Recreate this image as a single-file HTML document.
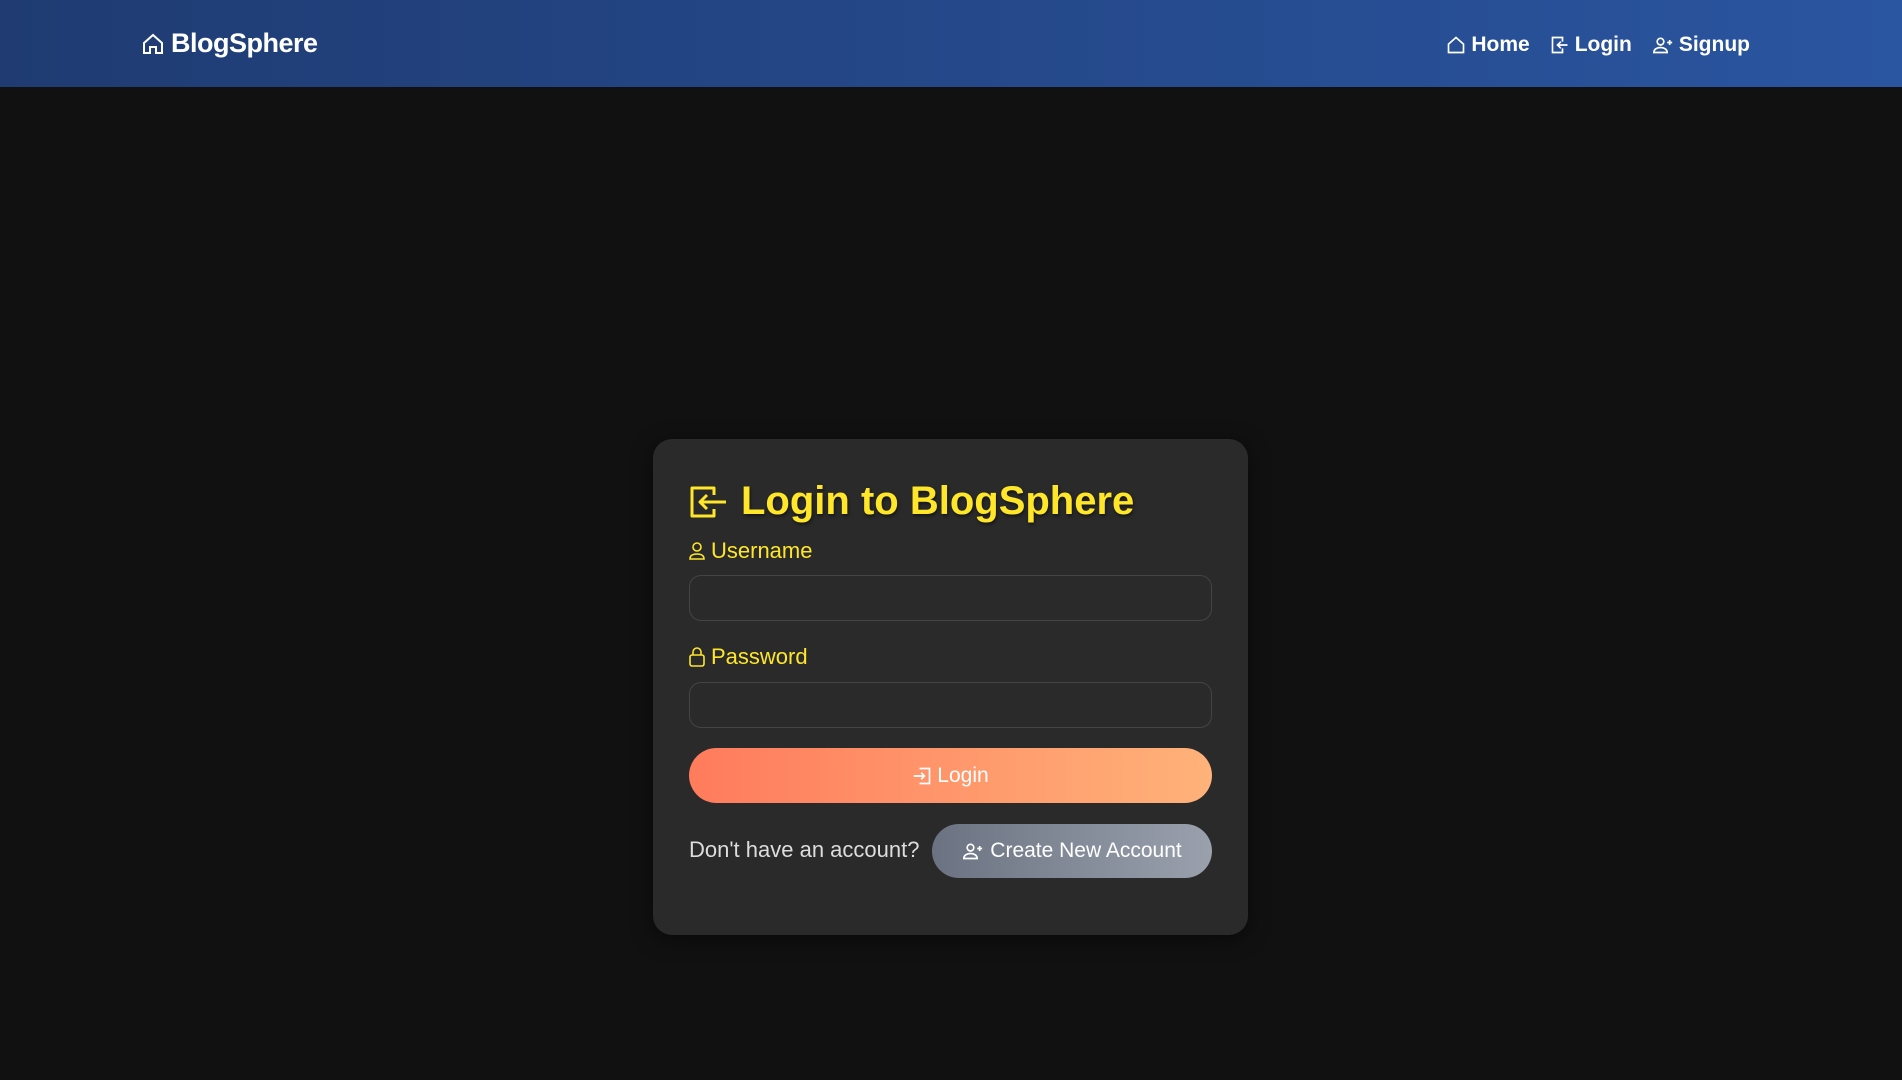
<!DOCTYPE html>
<html><head><meta charset="utf-8"><style>
*{box-sizing:border-box;margin:0;padding:0}
body{width:1902px;height:1080px;background:#111;font-family:"Liberation Sans",sans-serif;position:relative;overflow:hidden}
.nav{position:absolute;left:0;top:0;width:1902px;height:87px;background:linear-gradient(90deg,#1f3b72,#2a55a0);}
.brand{position:absolute;left:141px;top:28px;color:#fff;font-size:27px;font-weight:bold;display:flex;align-items:center;gap:6px;letter-spacing:-0.5px}
.links{position:absolute;right:152px;top:33px;display:flex;gap:20px;color:#fff;font-size:21px;font-weight:bold}
.links span{display:flex;align-items:center;gap:5px}
svg{display:block}
.card{position:absolute;left:653px;top:439px;width:595px;height:496px;background:#2a2a2a;border-radius:19px;box-shadow:0 4px 20px rgba(0,0,0,.5)}
.title{position:absolute;left:36px;top:40px;display:flex;align-items:center;gap:12px;color:#ffe629;font-size:40px;font-weight:bold;text-shadow:1px 2px 3px rgba(0,0,0,.5)}
.lbl{position:absolute;left:36px;color:#ffe629;font-size:22px;display:flex;align-items:center;gap:6px}
.inp{position:absolute;left:36px;width:523px;height:46px;border:1px solid #444;border-radius:12px;background:#2a2a2a}
.btn{position:absolute;left:36px;top:309px;width:523px;height:55px;border-radius:28px;background:linear-gradient(90deg,#ff7b5c,#ffb27a);color:#fff;font-size:21px;display:flex;align-items:center;justify-content:center;gap:5px}
.q{position:absolute;left:36px;top:398px;color:#ddd;font-size:22px}
.btn2{position:absolute;left:279px;top:385px;width:280px;height:54px;border-radius:27px;background:linear-gradient(90deg,#6b7382,#9aa1ad);color:#fff;font-size:21px;display:flex;align-items:center;justify-content:center;gap:6px}
</style></head><body>
<div class="nav">
 <div class="brand"><svg width="24" height="24" viewBox="0 0 24 24" fill="none" stroke="#fff" stroke-width="2"><path d="M3 11L12 3l9 8v10h-6v-6H9v6H3z"/></svg>BlogSphere</div>
 <div class="links">
  <span><svg width="20" height="20" viewBox="0 0 24 24" fill="none" stroke="#fff" stroke-width="2"><path d="M3 11L12 3l9 8v10H3z"/></svg>Home</span>
  <span><svg width="20" height="20" viewBox="0 0 24 24" fill="none" stroke="#fff" stroke-width="2"><path d="M15 8V3H3v18h12v-5"/><path d="M21 12H9m4-4l-4 4 4 4"/></svg>Login</span>
  <span><svg width="22" height="20" viewBox="0 0 26 24" fill="none" stroke="#fff" stroke-width="2"><circle cx="10" cy="8" r="4"/><path d="M2 21c0-4 4-6 8-6s8 2 8 6zM21 6v6m-3-3h6"/></svg>Signup</span>
 </div>
</div>
<div class="card">
 <div class="title"><svg width="40" height="34" viewBox="0 0 40 34" fill="none" stroke="#ffe629" stroke-width="3" stroke-linejoin="round"><path d="M25 10V3H3v28h22v-7"/><path d="M37 17H11m7-7l-7 7 7 7"/></svg>Login to BlogSphere</div>
 <div class="lbl" style="top:99px"><svg width="16" height="18" viewBox="0 0 16 18" fill="none" stroke="#ffe629" stroke-width="1.6"><circle cx="8" cy="5" r="4"/><path d="M1 17c0-4 3-5 7-5s7 1 7 5z"/></svg>Username</div>
 <div class="inp" style="top:136px"></div>
 <div class="lbl" style="top:205px"><svg width="16" height="20" viewBox="0 0 16 20" fill="none" stroke="#ffe629" stroke-width="1.6"><rect x="1" y="8" width="14" height="11" rx="2"/><path d="M4 8V5a4 4 0 018 0v3"/></svg>Password</div>
 <div class="inp" style="top:243px"></div>
 <div class="btn"><svg width="20" height="20" viewBox="0 0 24 24" fill="none" stroke="#fff" stroke-width="2"><path d="M9 3h12v18H9"/><path d="M2 12h13m-4-4l4 4-4 4"/></svg>Login</div>
 <div class="q">Don't have an account?</div>
 <div class="btn2"><svg width="22" height="20" viewBox="0 0 26 24" fill="none" stroke="#fff" stroke-width="2"><circle cx="10" cy="8" r="4"/><path d="M2 21c0-4 4-6 8-6s8 2 8 6zM21 6v6m-3-3h6"/></svg>Create New Account</div>
</div>
</body></html>
